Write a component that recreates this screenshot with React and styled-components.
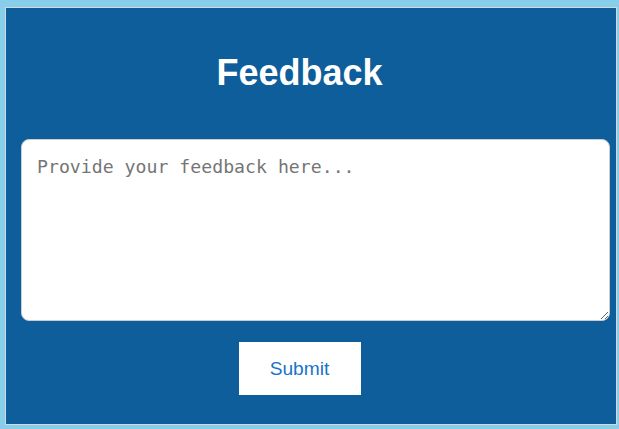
import React from "react";
import styled, { createGlobalStyle } from "styled-components";

const GlobalStyle = createGlobalStyle`
  html, body {
    margin: 0;
    padding: 0;
    background: #87ceeb;
  }
  body {
    padding: 7px 2px 4px 5px;
    font-family: "Liberation Sans", Arial, sans-serif;
  }
`;

const Panel = styled.div`
  box-sizing: border-box;
  height: 418px;
  background: #0e5e9b;
  border: 1px solid #d8d8d8;
  display: flex;
  flex-direction: column;
  align-items: stretch;
  padding: 0 6px 0 15px;
`;

const Title = styled.h1`
  margin: 43px 0 0 0;
  height: 44px;
  line-height: 44px;
  text-align: center;
  color: #ffffff;
  font-family: "Liberation Sans", Arial, sans-serif;
  font-weight: bold;
  font-size: 36px;
  padding-right: 32px;
`;

const Field = styled.textarea`
  box-sizing: border-box;
  margin-top: 44px;
  width: 589px;
  height: 182px;
  border: 1px solid #cccccc;
  border-radius: 8px;
  padding: 16px 15px;
  font-family: "DejaVu Sans Mono", "Liberation Mono", monospace;
  font-size: 18.2px;
  line-height: 22px;
  color: #333;
  background: #ffffff;
  resize: both;
  outline: none;
  &::placeholder {
    color: #757575;
  }
`;

const Actions = styled.div`
  display: flex;
  justify-content: center;
  margin-top: 21px;
  padding-right: 32px;
`;

const SubmitButton = styled.button`
  box-sizing: border-box;
  width: 122px;
  height: 53px;
  background: #ffffff;
  border: none;
  color: #1a73c8;
  font-family: "Liberation Sans", Arial, sans-serif;
  font-size: 19.2px;
  cursor: pointer;
`;

export default function App() {
  return (
    <>
      <GlobalStyle />
      <Panel>
        <Title>Feedback</Title>
        <Field placeholder="Provide your feedback here..." />
        <Actions>
          <SubmitButton>Submit</SubmitButton>
        </Actions>
      </Panel>
    </>
  );
}
